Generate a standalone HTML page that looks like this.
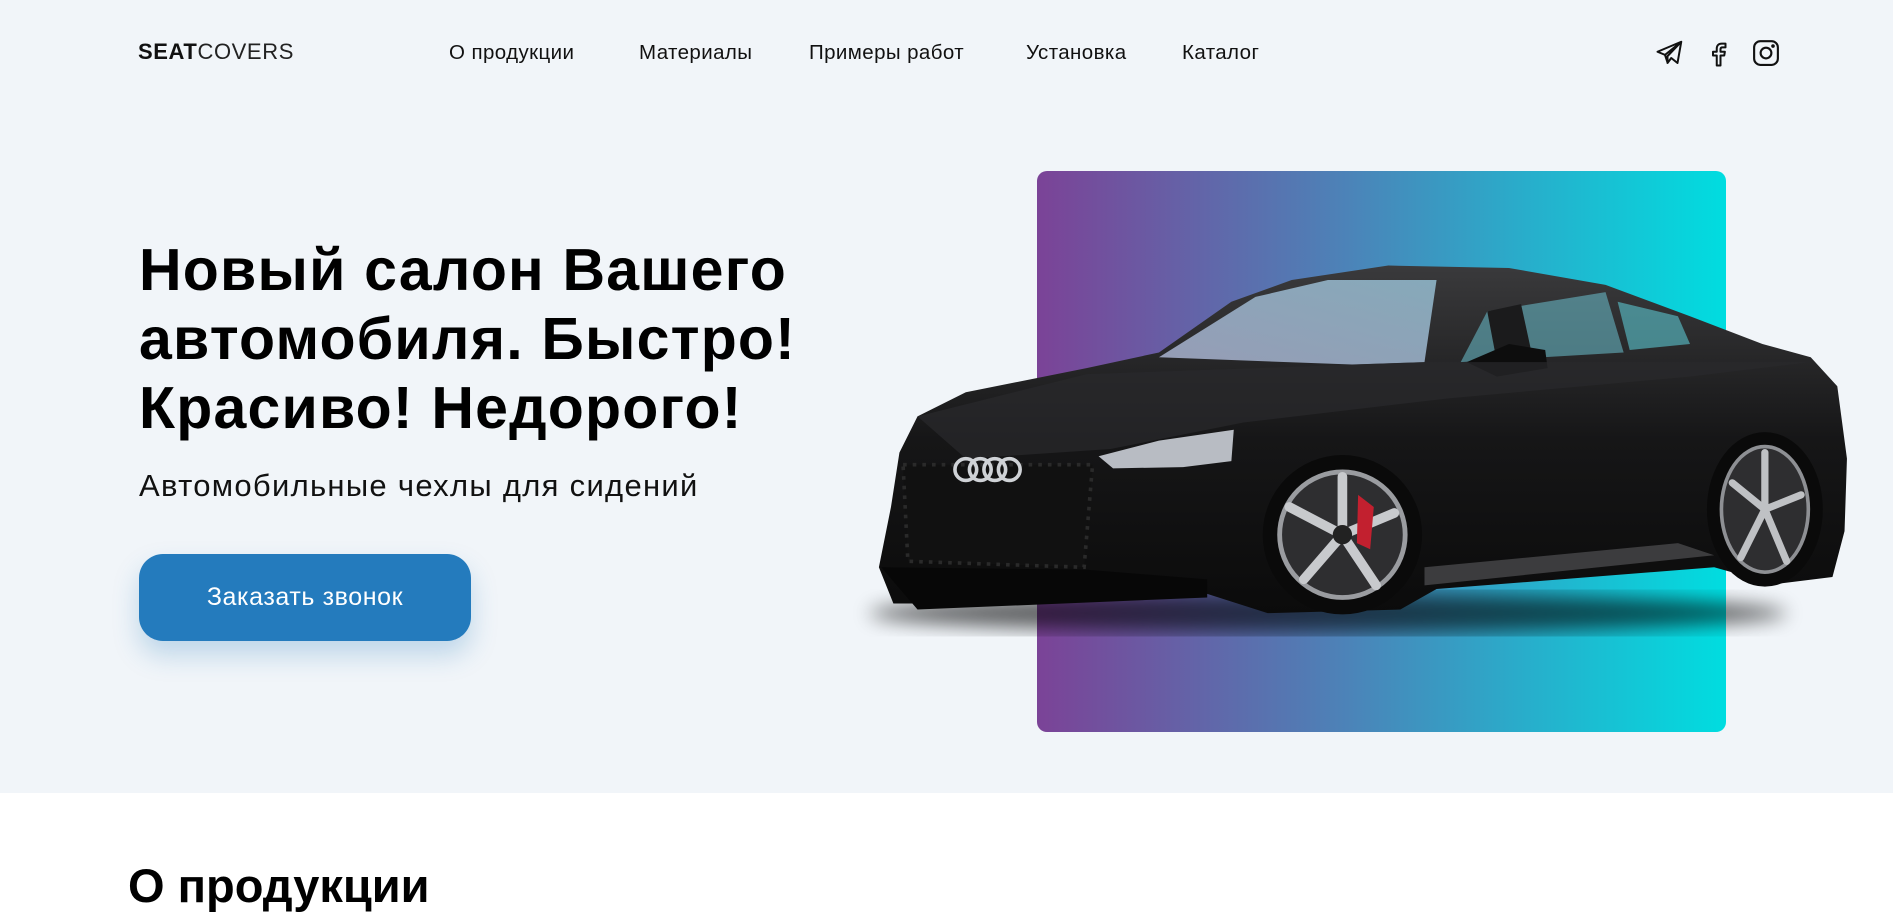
<!DOCTYPE html>
<html><head><meta charset="utf-8"><style>
*{margin:0;padding:0;box-sizing:border-box}
body{width:1893px;height:892px;overflow:hidden;background:#fff;font-family:"Liberation Sans",sans-serif;position:relative;color:#000}
.hero{position:absolute;left:0;top:0;width:1893px;height:793px;background:#f1f5f9}
.abs{position:absolute;white-space:nowrap}
.logo{left:138px;top:39px;font-size:22px;letter-spacing:0.6px;color:#222}
.logo b{font-weight:700;color:#111}
.nav{top:41px;font-size:20.5px;color:#111;letter-spacing:0.4px}
h1{position:absolute;left:139px;top:236px;font-size:59px;line-height:69px;font-weight:700;letter-spacing:1.2px;white-space:nowrap}
.sub{left:139px;top:468px;font-size:31px;color:#111;letter-spacing:1.3px}
.btn{position:absolute;left:139px;top:554px;width:332px;height:87px;border-radius:24px;background:#247bbd;color:#fff;font-size:25px;letter-spacing:0.6px;display:flex;align-items:center;justify-content:center;box-shadow:0 14px 26px rgba(36,123,189,0.25)}
.grad{position:absolute;left:1037px;top:171px;width:689px;height:561px;border-radius:10px;background:linear-gradient(90deg,#7b4397,#4c83b8 45%,#00dde0)}
.h2{left:128px;top:858px;font-size:47px;font-weight:700}
</style></head><body>
<div class="hero"></div>
<div class="abs logo"><b>SEAT</b>COVERS</div>
<div class="abs nav" style="left:449px">О продукции</div>
<div class="abs nav" style="left:639px">Материалы</div>
<div class="abs nav" style="left:809px">Примеры работ</div>
<div class="abs nav" style="left:1026px">Установка</div>
<div class="abs nav" style="left:1182px">Каталог</div>
<svg class="abs" style="left:1655px;top:38px" width="30" height="30" viewBox="0 0 24 24" fill="none" stroke="#111" stroke-width="1.6" stroke-linejoin="round"><path d="M21 3L2 11l6 2.5L21 3l-11 11.5 0 5.5 3-4 5 4z"/><path d="M8 13.5l2 6"/></svg>
<svg class="abs" style="left:1703px;top:37px" width="30" height="32" viewBox="0 0 24 24" fill="none" stroke="#111" stroke-width="1.6" stroke-linejoin="round"><path d="M14 22v-8h3l.5-3H14V9c0-1 .5-1.5 1.5-1.5H18V4.5h-3c-2.5 0-4 1.5-4 4V11H8v3h3v8z"/></svg>
<svg class="abs" style="left:1751px;top:38px" width="30" height="30" viewBox="0 0 24 24" fill="none" stroke="#111" stroke-width="1.7"><rect x="2.5" y="2.5" width="19" height="19" rx="5"/><circle cx="12" cy="12" r="4.3"/><circle cx="17.6" cy="6.4" r="0.6" fill="#111"/></svg>
<h1>Новый салон Вашего<br>автомобиля. Быстро!<br>Красиво! Недорого!</h1>
<div class="abs sub">Автомобильные чехлы для сидений</div>
<div class="btn">Заказать звонок</div>
<div class="grad"></div>
<svg class="abs" style="left:0;top:0" width="1893" height="892" viewBox="0 0 1568 739">
<defs>
<filter id="bl"><feGaussianBlur stdDeviation="8"/></filter>
<linearGradient id="bd" x1="0" y1="0" x2="0" y2="1"><stop offset="0" stop-color="#3a3a3c"/><stop offset="0.5" stop-color="#161617"/><stop offset="1" stop-color="#0b0b0b"/></linearGradient>
<linearGradient id="ws" x1="0" y1="1" x2="1" y2="0"><stop offset="0" stop-color="#a3aac6"/><stop offset="1" stop-color="#8fb6c8"/></linearGradient>
</defs>
<ellipse cx="1100" cy="508" rx="380" ry="16" fill="#000" opacity="0.6" filter="url(#bl)"/>
<path d="M740 500 L728 470 L738 420 L745 375 L760 345 L800 325 L900 305 L960 292 L1020 250 L1070 232 L1150 220 L1250 222 L1330 236 L1400 262 L1460 285 L1500 296 L1522 320 L1530 380 L1528 440 L1518 478 L1470 484 L1420 470 L1190 488 L1160 505 L1050 508 L1000 492 L780 500 Z" fill="url(#bd)"/>
<path d="M960 296 L1040 246 L1100 232 L1190 232 L1180 300 L1120 302 Z" fill="url(#ws)" opacity="0.9"/>
<path d="M1210 300 L1232 258 L1330 242 L1345 292 Z" fill="#6cc1cf" opacity="0.55"/>
<path d="M1350 290 L1340 250 L1390 262 L1400 285 Z" fill="#5cc6d0" opacity="0.6"/>
<path d="M1232 258 L1260 252 L1270 298 L1240 300Z" fill="#1b1b1c"/>
<path d="M1215 300 L1250 285 L1280 290 L1282 305 L1240 312 Z" fill="#0d0d0d"/>
<path d="M760 345 L900 310 L1180 300 L1500 300 L1400 312 L1200 330 L1030 350 L920 372 L800 380 Z" fill="#2a2a2c" opacity="0.7"/>
<path d="M910 378 L960 365 L1022 356 L1020 382 L980 387 L922 388 Z" fill="#b8bcc3"/>
<path d="M748 385 L905 385 L898 470 L752 465 Z" fill="#111"/>
<path d="M748 385 L905 385 L898 470 L752 465 Z" fill="none" stroke="#2a2a2a" stroke-width="3" stroke-dasharray="3 5"/>
<g fill="none" stroke="#cfd2d6" stroke-width="3"><circle cx="800" cy="389" r="9"/><circle cx="812" cy="389" r="9"/><circle cx="824" cy="389" r="9"/><circle cx="836" cy="389" r="9"/></g>
<path d="M730 470 L900 472 L1000 480 L1000 495 L760 505 Z" fill="#070707"/>
<path d="M1180 470 L1390 450 L1420 460 L1180 485Z" fill="#3c3c3e"/>
<circle cx="1112" cy="443" r="66" fill="#0a0a0a"/>
<circle cx="1112" cy="443" r="52" fill="#2e2e30" stroke="#9a9ca0" stroke-width="4"/>
<g stroke="#c8cacd" stroke-width="8" stroke-linecap="round"><path d="M1112 443 L1112 395"/><path d="M1112 443 L1155 425"/><path d="M1112 443 L1140 485"/><path d="M1112 443 L1080 480"/><path d="M1112 443 L1068 420"/></g>
<path d="M1125 410 L1138 420 L1135 455 L1124 450Z" fill="#c2202f"/>
<circle cx="1112" cy="443" r="8" fill="#222"/>
<ellipse cx="1462" cy="422" rx="48" ry="64" fill="#0a0a0a"/>
<ellipse cx="1462" cy="422" rx="36" ry="52" fill="#2e2e30" stroke="#8e9094" stroke-width="3"/>
<g stroke="#bfc1c4" stroke-width="6" stroke-linecap="round"><path d="M1462 422 L1462 375"/><path d="M1462 422 L1492 410"/><path d="M1462 422 L1480 465"/><path d="M1462 422 L1442 462"/><path d="M1462 422 L1435 400"/></g>
</svg>
<div class="abs h2">О продукции</div>
</body></html>
